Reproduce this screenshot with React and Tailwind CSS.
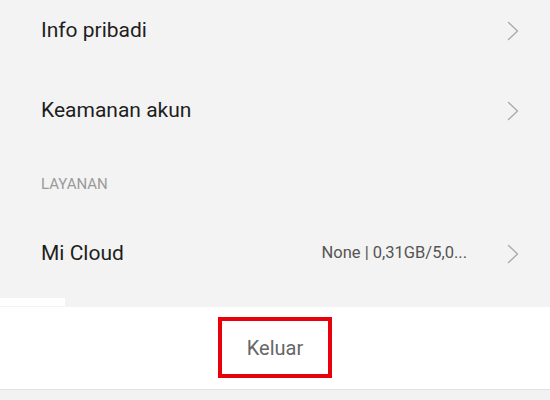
const Chevron = () => (
  <svg width="12" height="20" viewBox="0 0 12 20" fill="none" stroke="#ababab" strokeWidth="1.4" strokeLinecap="round" strokeLinejoin="round">
    <polyline points="1.5,1.5 10.5,10 1.5,18.5" />
  </svg>
);

const Row = ({ label, value }) => (
  <div className="flex h-[80px] items-center pl-[41px] pr-[31px]">
    <span className="flex-1 text-[21px] text-[#1e1e1e]">{label}</span>
    {value && <span className="mr-[40px] text-[16.5px] text-[#555555]">{value}</span>}
    <Chevron />
  </div>
);

export default function App() {
  return (
    <div className="flex h-[400px] w-[550px] flex-col overflow-hidden bg-[#f3f3f3]" style={{ fontFamily: 'Roboto, "Noto Sans", sans-serif' }}>
      <div className="-mt-[9px]">
        <Row label="Info pribadi" />
        <Row label="Keamanan akun" />
      </div>
      <div className="pl-[41px] pt-[22px] text-[15px] text-[#9a9a9a]">LAYANAN</div>
      <div className="mt-[18px]">
        <Row label="Mi Cloud" value="None | 0,31GB/5,0..." />
      </div>
      <div className="flex h-[13px] bg-[#f3f3f3]">
        <div className="mt-[4px] h-[8px] w-[65px] bg-white" />
      </div>
      <div className="flex h-[82px] items-center justify-center bg-white">
        <div className="flex h-[61px] w-[114px] items-center justify-center border-[4px] border-[#e8000b]">
          <span className="text-[20px] text-[#666666]">Keluar</span>
        </div>
      </div>
      <div className="flex-1 border-t border-[#e2e2e2] bg-[#f2f2f2]" />
    </div>
  );
}
